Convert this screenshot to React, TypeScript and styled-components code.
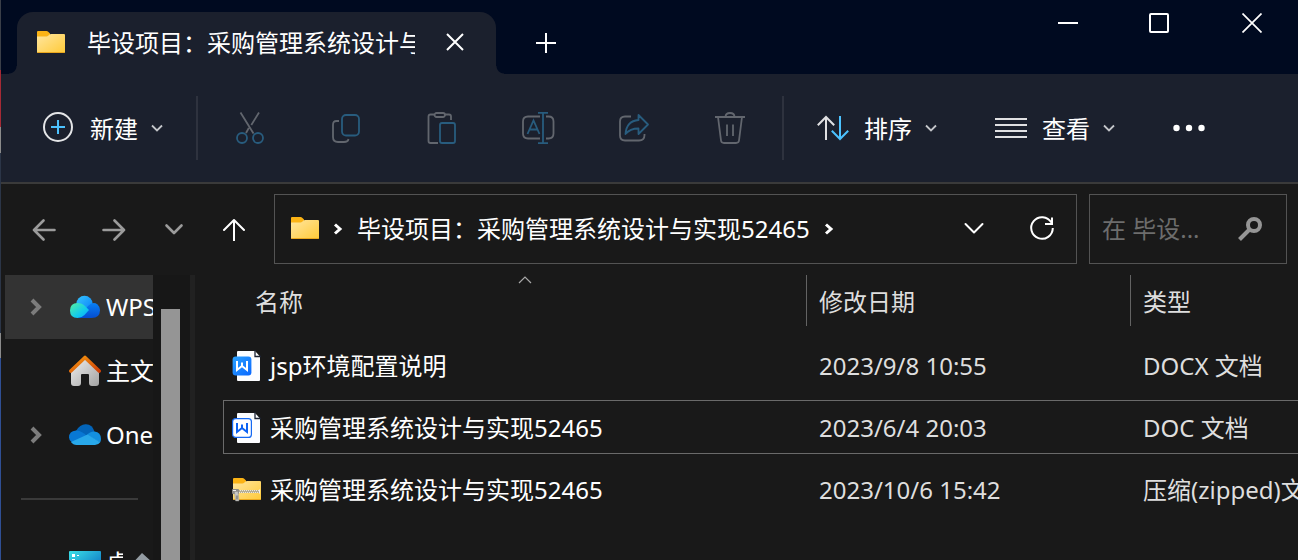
import React from "react";
import styled, { createGlobalStyle } from "styled-components";

const TITLE_BG = "#000a20";
const BAR_BG = "#1b202d";
const BODY_BG = "#191919";

const GlobalStyle = createGlobalStyle`
  *, *::before, *::after { box-sizing: border-box; }
  html, body { margin: 0; background: ${BODY_BG}; }
  body, button, input {
    font-family: "Noto Sans", "Noto Sans CJK SC", sans-serif;
    font-size: 24px;
    line-height: 32px;
    color: #fff;
  }
  button {
    padding: 0;
    border: 0;
    background: none;
    cursor: pointer;
  }
  svg { display: block; flex: none; }
`;

const Desktop = styled.div`
  display: flex;
  height: 100vh;
  overflow: hidden;
`;

const DesktopEdge = styled.div`
  flex: none;
  width: 1px;
  background: linear-gradient(
    #3a3f48 0 70px,
    #a52a35 70px 127px,
    #8b8b8b 127px 153px,
    #2b3547 153px 333px,
    #8b8b8b 333px 358px,
    #2f4f94 358px 100%
  );
`;

const Window = styled.div`
  flex: 1;
  min-width: 0;
  display: flex;
  flex-direction: column;
  background: ${BODY_BG};
`;

const TitleBar = styled.header`
  flex: none;
  display: flex;
  align-items: flex-end;
  height: 74px;
  padding-left: 16px;
  background: ${TITLE_BG};
`;

const Tab = styled.div`
  position: relative;
  display: flex;
  align-items: center;
  flex: 0 1 479px;
  min-width: 0;
  height: 62px;
  padding: 0 18px 0 20px;
  border-radius: 16px 16px 0 0;
  background: ${BAR_BG};

  &::before, &::after {
    content: "";
    position: absolute;
    bottom: 0;
    width: 8px;
    height: 8px;
  }
  &::before {
    right: 100%;
    background: radial-gradient(circle at 0 0, ${TITLE_BG} 7px, ${BAR_BG} 8px);
  }
  &::after {
    left: 100%;
    background: radial-gradient(circle at 100% 0, ${TITLE_BG} 7px, ${BAR_BG} 8px);
  }
`;

const TabTitle = styled.span`
  flex: 1;
  min-width: 0;
  margin: 0 17px 0 22px;
  overflow: hidden;
  white-space: nowrap;
`;

const IconButton = styled.button<{ $width: number; $height?: number }>`
  flex: none;
  display: flex;
  align-items: center;
  justify-content: center;
  width: ${(p) => p.$width}px;
  height: ${(p) => p.$height ?? 48}px;
`;

const WindowControls = styled.div`
  display: flex;
  align-self: flex-start;
  margin-left: auto;
`;

const NewTabSlot = styled.div`
  display: flex;
  align-items: center;
  height: 62px;
  padding-left: 20px;
`;

const CommandBar = styled.div`
  flex: none;
  display: flex;
  align-items: center;
  gap: 4px;
  height: 110px;
  padding: 0 13px;
  border-bottom: 2px solid #3a3a3a;
  background: ${BAR_BG};
`;

const CommandGroup = styled.div`
  display: flex;
  align-items: center;
`;

const MenuButton = styled.button`
  display: flex;
  align-items: center;
  height: 64px;
  padding: 0 29px;
  white-space: nowrap;

  span { margin: 2px 13px 0 15px; }
`;

const Divider = styled.div`
  flex: none;
  width: 2px;
  height: 64px;
  background: #2e323e;
`;

const NavBar = styled.nav`
  flex: none;
  display: flex;
  align-items: center;
  height: 83px;
  padding: 7px 11px 0 8px;
`;

const AddressBar = styled.div`
  flex: 1;
  min-width: 0;
  display: flex;
  align-items: center;
  height: 70px;
  margin: 0 12px 0 5px;
  padding-left: 16px;
  border: 1px solid #535353;
`;

const Crumbs = styled.div`
  flex: 1;
  min-width: 0;
  display: flex;
  align-items: center;
  gap: 14px;
  overflow: hidden;
  white-space: nowrap;
`;

const Crumb = styled.a`
  color: #fff;
  text-decoration: none;
`;

const SearchBox = styled.form`
  flex: none;
  display: flex;
  align-items: center;
  width: 198px;
  height: 70px;
  padding-left: 12px;
  border: 1px solid #535353;

  input {
    flex: 1;
    min-width: 0;
    padding: 0;
    border: 0;
    outline: 0;
    background: none;
  }
  input::placeholder { color: #6d6d6d; opacity: 1; }
`;

const Content = styled.div`
  flex: 1;
  min-height: 0;
  display: flex;
  overflow: hidden;
`;

const Sidebar = styled.aside`
  flex: none;
  display: flex;
  width: 194px;
  margin-top: 8px;
  padding-left: 4px;
  border-right: 5px solid #212121;
  overflow: hidden;
`;

const Tree = styled.ul`
  flex: none;
  width: 148px;
  margin: 0;
  padding: 0;
  list-style: none;
  overflow: hidden;
`;

const TreeItem = styled.li<{ $selected?: boolean }>`
  height: 64px;
  background: ${(p) => (p.$selected ? "#333333" : "transparent")};
`;

const TreeLink = styled.a`
  display: flex;
  align-items: center;
  height: 100%;
  padding-left: 25px;
  color: #fff;
  text-decoration: none;
  white-space: nowrap;
`;

const TreeArrow = styled.span`
  flex: none;
  width: 39px;
`;

const TreeLabel = styled.span<{ $short?: boolean }>`
  flex: 1;
  min-width: 0;
  margin: 0 ${(p) => (p.$short ? 10 : 0)}px 0 5px;
  overflow: hidden;
`;

const TreeRule = styled.hr`
  height: 2px;
  margin: 31px 15px 31px 16px;
  border: 0;
  background: #3a3a3a;
`;

const ScrollTrack = styled.div`
  flex: none;
  width: 37px;
  padding: 34px 10px 0 8px;
  background: #171717;
`;

const ScrollThumb = styled.div`
  width: 19px;
  height: 100%;
  background: #959595;
`;

const Files = styled.main`
  flex: 1;
  min-width: 0;
  padding-left: 28px;
  overflow: hidden;
`;

const FileTable = styled.table`
  width: 100%;
  table-layout: fixed;
  border-collapse: separate;
  border-spacing: 0 8px;
`;

const HeadCell = styled.th<{ $width?: number }>`
  position: relative;
  width: ${(p) => (p.$width ? `${p.$width}px` : "auto")};
  height: 55px;
  padding: 0;
  vertical-align: top;
`;

const HeadButton = styled.button<{ $first?: boolean }>`
  display: block;
  width: 100%;
  height: 51px;
  padding: 2px 0 0 ${(p) => (p.$first ? 32 : 12)}px;
  border-left: ${(p) => (p.$first ? 0 : 1)}px solid #636363;
  color: #dedede;
  text-align: left;
`;

const SortMark = styled.span`
  position: absolute;
  top: 1px;
  left: 295px;
`;

const FileRow = styled.tr<{ $focused?: boolean }>`
  td {
    height: 54px;
    padding: 2px 0 0 13px;
    border: 1px solid ${(p) => (p.$focused ? "#6a6a6a" : "transparent")};
    border-width: 1px 0;
    color: #dedede;
    white-space: nowrap;
    overflow: hidden;
  }
  td:first-child {
    padding-left: 8px;
    border-left-width: 1px;
    color: #fff;
  }
`;

const FileName = styled.div`
  display: flex;
  align-items: center;
  gap: 8px;
`;

type StrokeProps = { w: number; h: number; d: string; color?: string; sw?: number; round?: boolean };

const Stroke = ({ w, h, d, color = "#fff", sw = 2, round }: StrokeProps) => (
  <svg
    width={w}
    height={h}
    viewBox={`0 0 ${w} ${h}`}
    fill="none"
    stroke={color}
    strokeWidth={sw}
    strokeLinecap={round ? "round" : "butt"}
    strokeLinejoin={round ? "round" : "miter"}
    aria-hidden
  >
    <path d={d} />
  </svg>
);

const MenuArrow = ({ color = "#c4c6ca" }: { color?: string }) => (
  <Stroke w={12} h={8} d="M1 1.5 6 6.5 11 1.5" color={color} sw={1.8} />
);

const Folder = ({ zipped }: { zipped?: boolean }) => {
  const id = zipped ? "folderZip" : "folder";
  return (
    <svg width={zipped ? 30 : 28} height={24} viewBox={zipped ? "-1 1 30 24" : "0 1 28 24"} aria-hidden>
      <defs>
        <linearGradient id={id} x1="0" y1="0" x2="1" y2="1">
          <stop offset="0" stopColor="#ffe6a0" />
          <stop offset="1" stopColor="#ffca38" />
        </linearGradient>
      </defs>
      <path d="M0 2a1 1 0 0 1 1-1h8.500q1 0 1.700.7L13 3.500V8H0z" fill="#fbb315" />
      <path d="M0 6.500h9.500q1 0 1.700-.7l1.300-1.300q.6-.5 1.500-.5H27a1 1 0 0 1 1 1V22a1 1 0 0 1-1 1H1a1 1 0 0 1-1-1z" fill={`url(#${id})`} />
      <path d="M.5 22.500h27" stroke="#eba81e" />
      {zipped && (
        <g>
          <path d="M5 14.500h22" stroke="#efe9d6" strokeWidth="3" />
          <path d="M6 14h21" stroke="#7a7257" strokeWidth="1" strokeDasharray="1 1" />
          <path d="M7 15h20" stroke="#7a7257" strokeWidth="1" strokeDasharray="1 1" />
          <rect x="-1" y="12" width="7" height="5" rx="1" fill="#8d8b86" />
          <path d="M0 13.500h3M26.500 12.500v4" stroke="#f0f0f0" />
          <path d="M1.500 14.500H5L6 24H2.500z" fill="#c9c9c7" stroke="#8a8a86" strokeWidth=".5" />
          <path d="M4 18.500v4" stroke="#6d6d6a" strokeWidth="1.200" />
        </g>
      )}
    </svg>
  );
};

const DocIcon = ({ legacy }: { legacy?: boolean }) => (
  <svg width="30" height="32" viewBox="0 0 30 32" aria-hidden>
    <defs>
      <linearGradient id="docBadge" x1="0" y1="0" x2="1" y2="1">
        <stop offset="0" stopColor="#2ba3ff" />
        <stop offset="1" stopColor="#0866ff" />
      </linearGradient>
    </defs>
    <path d="M6 1h17l5 5.500V30a1 1 0 0 1-1 1H6a1 1 0 0 1-1-1V2a1 1 0 0 1 1-1z" fill="#fcfdff" />
    <path d="M23 0v6.500h6" fill="none" stroke="#1c2434" strokeWidth="1.300" />
    <rect x=".6" y="6.600" width="18.800" height="18.800" rx="3" fill={legacy ? "#fff" : "url(#docBadge)"} stroke={legacy ? "#1468f2" : "none"} strokeWidth="1.200" />
    <path d="M5 11v9l5-4 5 4v-9M10 12.500V16" fill="none" stroke={legacy ? "#0d63f3" : "#fff"} strokeWidth="2" />
  </svg>
);

const GREY = "#62666e";
const BLUE = "#285c7e";

const CutIcon = () => (
  <svg width="32" height="34" viewBox="0 0 32 34" fill="none" strokeWidth="1.800" aria-hidden>
    <path d="M6.500 1.500 19.500 22.500M25 1.500 17.300 14M14.800 17 12 22" stroke={GREY} />
    <circle cx="8" cy="27" r="5" stroke={BLUE} />
    <circle cx="24" cy="27" r="5" stroke={BLUE} />
  </svg>
);

const CopyIcon = () => (
  <svg width="32" height="34" viewBox="0 0 32 34" fill="none" strokeWidth="1.800" aria-hidden>
    <path d="M9 10H6.500Q3 10 3 14v12q0 5 5 5h6q4 0 4.500-3" stroke={GREY} />
    <rect x="12" y="4" width="17" height="20.500" rx="4" stroke={BLUE} />
  </svg>
);

const PasteIcon = () => (
  <svg width="32" height="34" viewBox="0 0 32 34" fill="none" strokeWidth="1.800" aria-hidden>
    <path d="M8 3.500H4.500Q2.500 3.500 2.500 5.500V30q0 2 2 2H12M19 3.500h4q2 0 2 2V9" stroke={GREY} />
    <rect x="8.500" y="2" width="10.500" height="4" rx="2" stroke={GREY} />
    <rect x="14" y="12" width="15" height="20" rx="2" stroke={BLUE} />
  </svg>
);

const RenameIcon = () => (
  <svg width="34" height="34" viewBox="0 0 34 34" fill="none" strokeWidth="1.800" aria-hidden>
    <path d="M19 5.500H7q-5 0-5 5v12q0 5 5 5h12M25 5.500h2.500q5 0 5 5v12q0 5-5 5H25" stroke={GREY} />
    <path d="M17 1.900h10M22 2v30M17 32.100h10M6.500 23 12.500 9.500 18.500 23M8.500 18.500h8" stroke={BLUE} />
  </svg>
);

const ShareIcon = () => (
  <svg width="32" height="34" viewBox="0 0 32 34" fill="none" strokeWidth="1.800" strokeLinejoin="round" aria-hidden>
    <path d="M13 5.500H7q-5 0-5 5v14q0 5 5 5h14q5.500 0 5.500-5.500V23" stroke={GREY} />
    <path d="M20.500 4 30 13.500 20.500 23v-5.500Q12 17.500 7.500 23 8.500 10 20.500 9z" stroke={BLUE} />
  </svg>
);

const DeleteIcon = () => (
  <svg width="32" height="34" viewBox="0 0 32 34" fill="none" stroke={GREY} strokeWidth="1.800" aria-hidden>
    <path d="M1 6h30M11.500 6q0-4 4.500-4t4.500 4M4 6l3 23.500q.3 2.500 3 2.500h12q2.700 0 3-2.500L28 6M13 13.500V25M19 13.500V25" />
  </svg>
);

const NewIcon = () => (
  <svg width="32" height="32" viewBox="0 0 32 32" fill="none" aria-hidden>
    <circle cx="15" cy="15" r="14" stroke="#e4e5e7" strokeWidth="2" />
    <path d="M8 15h14M15 8v14" stroke="#4cc2ff" strokeWidth="2" />
  </svg>
);

const SortIcon = () => (
  <svg width="32" height="26" viewBox="0 0 32 26" fill="none" strokeWidth="2" aria-hidden>
    <path d="M9 25V2M.8 10.200 9 2l8.200 8.200" stroke="#e0e0e2" />
    <path d="M23 1v23M14.800 15.800 23 24l8.200-8.200" stroke="#4cc2ff" />
  </svg>
);

const MoreIcon = () => (
  <svg width="32" height="8" viewBox="0 0 32 8" fill="#fff" aria-hidden>
    <circle cx="3.500" cy="4" r="3.200" />
    <circle cx="16" cy="4" r="3.200" />
    <circle cx="28.500" cy="4" r="3.200" />
  </svg>
);

const RefreshIcon = () => (
  <svg width="26" height="28" viewBox="0 0 26 28" fill="none" stroke="#fff" strokeWidth="2" aria-hidden>
    <path d="M22.300 7.500A10.800 10.800 0 1 0 23.800 13M23 2.500v6.500h-7" />
  </svg>
);

const SearchIcon = () => (
  <svg width="24" height="24" viewBox="0 0 24 24" fill="none" stroke="#959595" aria-hidden>
    <circle cx="16" cy="8" r="6" strokeWidth="4" />
    <path d="M11.500 12.500 1.500 22.500" strokeWidth="4" />
  </svg>
);

const WpsCloud = () => (
  <svg width="32" height="24" viewBox="0 0 32 24" aria-hidden>
    <defs>
      <linearGradient id="wpsTop" x1="0" y1="0" x2="1" y2="1">
        <stop offset="0" stopColor="#35c5ff" />
        <stop offset="1" stopColor="#087cf7" />
      </linearGradient>
      <linearGradient id="wpsRight" x1="0" y1="0" x2="0" y2="1">
        <stop offset="0" stopColor="#087ff5" />
        <stop offset="1" stopColor="#054dd0" />
      </linearGradient>
      <linearGradient id="wpsLeft" x1="0" y1="0" x2="1" y2="1">
        <stop offset="0" stopColor="#55f0a0" />
        <stop offset=".6" stopColor="#12cbec" />
        <stop offset="1" stopColor="#09a5ff" />
      </linearGradient>
    </defs>
    <circle cx="15.500" cy="9" r="8.200" fill="url(#wpsTop)" />
    <path d="M9 23 19 11q5-5 9.500-1.500 2.500 2.200 2.500 5.500 0 8-8.500 8z" fill="url(#wpsRight)" />
    <path d="M8.500 8Q13 8 16 11l4 4-4.500 5q-3 3-7 3Q1 23 1 15.500 1 8 8.500 8z" fill="url(#wpsLeft)" />
  </svg>
);

const HomeIcon = () => (
  <svg width="32" height="32" viewBox="0 0 32 32" aria-hidden>
    <defs>
      <linearGradient id="homeWall" x1="0" y1="0" x2="1" y2="1">
        <stop offset="0" stopColor="#f0f0f0" />
        <stop offset="1" stopColor="#a3a3a3" />
      </linearGradient>
      <linearGradient id="homeRoof" x1="0" y1="0" x2="1" y2="1">
        <stop offset="0" stopColor="#f79a10" />
        <stop offset="1" stopColor="#cf4008" />
      </linearGradient>
    </defs>
    <path d="M2 15 16 3l14 12v13q0 3-3 3h-4q-3 0-3-3v-8q0-1-1-1h-6q-1 0-1 1v8q0 3-3 3H5q-3 0-3-3z" fill="url(#homeWall)" />
    <path d="m1.800 16 14.200-13.500L30.200 16" fill="none" stroke="url(#homeRoof)" strokeWidth="3.600" strokeLinejoin="round" strokeLinecap="round" />
  </svg>
);

const OneDriveIcon = () => (
  <svg width="32" height="22" viewBox="0 0 32 22" aria-hidden>
    <path d="M7 7Q11 0 17 .3q6.500.4 8.500 7.200L20 12z" fill="#0364b8" />
    <path d="M3 18.500Q0 16.500 0 13.500 0 7 7 6.500q3-.3 6 1.800l9 5.200z" fill="#0878d4" />
    <path d="M18 11q3-3.800 7.500-3.500 6.500.8 6.500 7.500 0 2-1 3.500z" fill="#1490df" />
    <path d="M2 18 18.500 10.500 31.200 18.300Q29.500 21 26 21H7.500Q4 21 2 18z" fill="#28a8ea" />
  </svg>
);

const DesktopIcon = () => (
  <svg width="32" height="26" viewBox="0 0 32 26" aria-hidden>
    <defs>
      <linearGradient id="desk" x1="0" y1="0" x2="1" y2="1">
        <stop offset="0" stopColor="#3be0e6" />
        <stop offset="1" stopColor="#0563bd" />
      </linearGradient>
    </defs>
    <rect y="1" width="32" height="24" rx="1" fill="url(#desk)" />
    <path d="M3 4h3v3H3zM3 9h3v3H3zM8 5h2v1H8z" fill="#fff" />
  </svg>
);

const PinIcon = () => (
  <svg width="20" height="24" viewBox="0 0 20 24" aria-hidden>
    <path d="M9 2 19 11l-3 2.500-2.500 6-6-5-4 4 3-5L2 9.500z" fill="#949ca3" />
  </svg>
);

const TreeChevron = () => <Stroke w={14} h={18} d="M2 2 9 9 2 16" color="#7c7c7c" sw={4} />;
const CrumbChevron = () => <Stroke w={10} h={14} d="M2 2.500 7 7 2 11.500" sw={3} />;

const commands = [
  { label: "剪切", icon: <CutIcon /> },
  { label: "复制", icon: <CopyIcon /> },
  { label: "粘贴", icon: <PasteIcon /> },
  { label: "重命名", icon: <RenameIcon /> },
  { label: "共享", icon: <ShareIcon /> },
  { label: "删除", icon: <DeleteIcon /> },
];

const files = [
  { name: "jsp环境配置说明", date: "2023/9/8 10:55", type: "DOCX 文档", icon: <DocIcon /> },
  { name: "采购管理系统设计与实现52465", date: "2023/6/4 20:03", type: "DOC 文档", icon: <DocIcon legacy />, focused: true },
  { name: "采购管理系统设计与实现52465", date: "2023/10/6 15:42", type: "压缩(zipped)文件夹", icon: <Folder zipped /> },
];

export default function App() {
  return (
    <Desktop lang="zh-CN">
      <GlobalStyle />
      <DesktopEdge />
      <Window>
        <TitleBar>
          <Tab>
            <Folder />
            <TabTitle>毕设项目：采购管理系统设计与实现52465</TabTitle>
            <IconButton $width={46} aria-label="关闭标签页">
              <Stroke w={18} h={20} d="M1 1 17 17M17 1 1 17" />
            </IconButton>
          </Tab>
          <NewTabSlot>
            <IconButton $width={60} aria-label="新标签页">
              <Stroke w={20} h={20} d="M0 10H20M10 0V20" />
            </IconButton>
          </NewTabSlot>
          <WindowControls>
            <IconButton $width={92} $height={46} aria-label="最小化">
              <Stroke w={20} h={20} d="M0 10H20" />
            </IconButton>
            <IconButton $width={92} $height={46} aria-label="最大化">
              <Stroke w={22} h={20} d="M2 1H18Q19 1 19 2V18Q19 19 18 19H2Q1 19 1 18V2Q1 1 2 1z" />
            </IconButton>
            <IconButton $width={92} $height={46} aria-label="关闭">
              <Stroke w={20} h={20} d="M.5.5 19.500 19.500M19.500.5.5 19.500" sw={1.7} />
            </IconButton>
          </WindowControls>
        </TitleBar>

        <CommandBar role="toolbar">
          <MenuButton>
            <NewIcon />
            <span>新建</span>
            <MenuArrow />
          </MenuButton>
          <Divider />
          <CommandGroup>
            {commands.map((c) => (
              <IconButton key={c.label} $width={96} $height={64} aria-label={c.label} disabled>
                {c.icon}
              </IconButton>
            ))}
          </CommandGroup>
          <Divider />
          <CommandGroup>
            <MenuButton>
              <SortIcon />
              <span>排序</span>
              <MenuArrow />
            </MenuButton>
            <MenuButton>
              <Stroke w={32} h={20} d="M0 1H32M0 7H32M0 13H32M0 19H32" color="#e0e0e2" />
              <span>查看</span>
              <MenuArrow />
            </MenuButton>
            <IconButton $width={90} $height={64} aria-label="查看更多">
              <MoreIcon />
            </IconButton>
          </CommandGroup>
        </CommandBar>

        <NavBar>
          <IconButton $width={70} aria-label="后退">
            <Stroke w={24} h={24} d="M22.500 13H2M11.500 3.500 2 13 11.500 22.500" color="#9b9b9b" sw={2.6} round />
          </IconButton>
          <IconButton $width={70} aria-label="前进">
            <Stroke w={24} h={24} d="M1.500 13H22M12.500 3.500 22 13 12.500 22.500" color="#9b9b9b" sw={2.6} round />
          </IconButton>
          <IconButton $width={50} aria-label="最近浏览的位置">
            <Stroke w={20} h={12} d="M2.500 2.500 10 10 17.500 2.500" color="#9b9b9b" sw={2.6} round />
          </IconButton>
          <IconButton $width={70} aria-label="上移">
            <Stroke w={24} h={24} d="M12 24V3M2 13 12 3 22 13" sw={2} round />
          </IconButton>
          <AddressBar>
            <Crumbs>
              <Folder />
              <CrumbChevron />
              <Crumb href="#folder">毕设项目：采购管理系统设计与实现52465</Crumb>
              <CrumbChevron />
            </Crumbs>
            <IconButton $width={68} aria-label="以前的位置">
              <Stroke w={22} h={14} d="M2.500 2 11 10.500 19.500 2" round />
            </IconButton>
            <IconButton $width={68} aria-label="刷新">
              <RefreshIcon />
            </IconButton>
          </AddressBar>
          <SearchBox>
            <input type="text" placeholder="在 毕设..." aria-label="搜索" />
            <IconButton $width={72} type="button" aria-label="搜索">
              <SearchIcon />
            </IconButton>
          </SearchBox>
        </NavBar>

        <Content>
          <Sidebar>
            <Tree>
              <TreeItem $selected>
                <TreeLink href="#wps">
                  <TreeArrow><TreeChevron /></TreeArrow>
                  <WpsCloud />
                  <TreeLabel>WPS云盘</TreeLabel>
                </TreeLink>
              </TreeItem>
              <TreeItem>
                <TreeLink href="#home">
                  <TreeArrow />
                  <HomeIcon />
                  <TreeLabel>主文件夹</TreeLabel>
                </TreeLink>
              </TreeItem>
              <TreeItem>
                <TreeLink href="#onedrive">
                  <TreeArrow><TreeChevron /></TreeArrow>
                  <OneDriveIcon />
                  <TreeLabel>OneDrive</TreeLabel>
                </TreeLink>
              </TreeItem>
              <li><TreeRule /></li>
              <TreeItem>
                <TreeLink href="#desktop">
                  <TreeArrow />
                  <DesktopIcon />
                  <TreeLabel $short>桌面</TreeLabel>
                  <PinIcon />
                </TreeLink>
              </TreeItem>
            </Tree>
            <ScrollTrack>
              <ScrollThumb />
            </ScrollTrack>
          </Sidebar>

          <Files>
            <FileTable>
              <thead>
                <tr>
                  <HeadCell $width={583}>
                    <HeadButton $first>名称</HeadButton>
                    <SortMark>
                      <Stroke w={14} h={8} d="M1 7 7 1 13 7" color="#a8a8a8" sw={1.2} />
                    </SortMark>
                  </HeadCell>
                  <HeadCell $width={324}>
                    <HeadButton>修改日期</HeadButton>
                  </HeadCell>
                  <HeadCell>
                    <HeadButton>类型</HeadButton>
                  </HeadCell>
                </tr>
              </thead>
              <tbody>
                {files.map((f) => (
                  <FileRow key={f.type} $focused={f.focused}>
                    <td>
                      <FileName>
                        {f.icon}
                        {f.name}
                      </FileName>
                    </td>
                    <td>{f.date}</td>
                    <td>{f.type}</td>
                  </FileRow>
                ))}
              </tbody>
            </FileTable>
          </Files>
        </Content>
      </Window>
    </Desktop>
  );
}
